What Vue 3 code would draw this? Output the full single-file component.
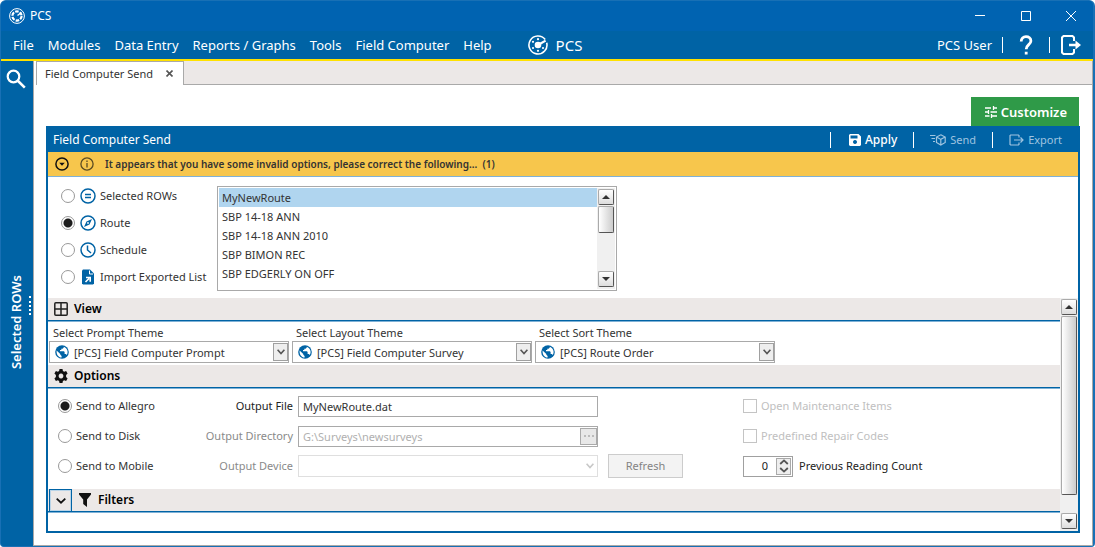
<script setup>
import { ref } from 'vue'

const menu = ['File', 'Modules', 'Data Entry', 'Reports / Graphs', 'Tools', 'Field Computer', 'Help']
const sources = [
  { id: 'rows', label: 'Selected ROWs' },
  { id: 'route', label: 'Route' },
  { id: 'schedule', label: 'Schedule' },
  { id: 'import', label: 'Import Exported List' }
]
const source = ref('route')
const routes = ['MyNewRoute', 'SBP 14-18 ANN', 'SBP 14-18 ANN 2010', 'SBP BIMON REC', 'SBP EDGERLY ON OFF']
const route = ref('MyNewRoute')
const themes = [
  { id: 'prompt', label: 'Select Prompt Theme', value: '[PCS] Field Computer Prompt' },
  { id: 'layout', label: 'Select Layout Theme', value: '[PCS] Field Computer Survey' },
  { id: 'sort', label: 'Select Sort Theme', value: '[PCS] Route Order' }
]
const target = ref('allegro')
const file = ref('MyNewRoute.dat')
const directory = ref('G:\\Surveys\\newsurveys')
const count = ref('0')
</script>

<template>
  <div class="window">
    <header class="titlebar">
      <svg class="app-icon" viewBox="0 0 16 16" fill="none" stroke="#fff">
        <circle cx="8" cy="8" r="7.4" stroke-width="1" />
        <circle cx="8" cy="8" r="4.6" stroke-width="2.2" stroke-dasharray="3.6 1.2" />
        <path d="M8.500 7.500l4-3" stroke-width="1.400" />
      </svg>
      <span class="app-title">PCS</span>
      <button class="win-btn" aria-label="Minimize">
        <svg viewBox="0 0 10 10"><path d="M0 4.500h10" /></svg>
      </button>
      <button class="win-btn" aria-label="Maximize">
        <svg viewBox="0 0 10 10"><path d="M.5.5h9v9h-9z" /></svg>
      </button>
      <button class="win-btn" aria-label="Close">
        <svg viewBox="0 0 10 10"><path d="M0 0l10 10M10 0L0 10" /></svg>
      </button>
    </header>

    <nav class="menubar">
      <button v-for="m in menu" :key="m" class="menu-item">{{ m }}</button>
      <div class="brand">
        <svg viewBox="0 0 20 20" width="20" height="20" fill="none" stroke="#fff">
          <path d="M17.200 4.600A9 9 0 1 0 18.700 7.800" stroke-width="1.600" />
          <path d="M10 10l7.600-4.400" stroke-width="2.200" />
          <circle cx="10" cy="10" r="3.300" fill="#fff" stroke="none" />
          <g fill="#fff" stroke="none">
            <circle cx="10" cy="4.200" r="1.100" /><circle cx="5" cy="6.800" r="1.100" />
            <circle cx="5" cy="13" r="1.100" /><circle cx="10" cy="15.800" r="1.100" />
            <circle cx="15" cy="13" r="1.100" />
          </g>
        </svg>
        <span>PCS</span>
      </div>
      <div class="user-tools">
        <span>PCS User</span>
        <i class="bar"></i>
        <button class="tool" aria-label="Help">
          <svg viewBox="0 0 14 20" width="14" height="20" fill="none" stroke="#fff" stroke-width="2.800">
            <path d="M2.200 6.600C2.200 3.300 4.200 1.700 7 1.700s4.900 1.600 4.900 4.300c0 3.600-4.700 3.800-4.700 8.200M7.200 16.800v2.800" />
          </svg>
        </button>
        <i class="bar"></i>
        <button class="tool" aria-label="Log out">
          <svg viewBox="0 0 20 20" width="20" height="20" fill="none" stroke="#fff" stroke-width="2">
            <path d="M13 6V2.500L11.500 1H2.500L1 2.500v15L2.500 19h9l1.500-1.500V14" />
            <path d="M8 10h8" stroke-width="2.400" />
            <path d="M14.500 5.500l5.500 4.500-5.500 4.500z" fill="#fff" stroke="none" />
          </svg>
        </button>
      </div>
    </nav>

    <div class="body">
      <aside class="sidebar">
        <button class="tool" aria-label="Search">
          <svg viewBox="0 0 20 20" width="20" height="20" fill="none" stroke="#fff">
            <circle cx="7.500" cy="7.500" r="5.800" stroke-width="2.200" />
            <path d="M11.800 11.800l7 6.800" stroke-width="2.600" />
          </svg>
        </button>
        <span class="side-label">Selected ROWs</span>
        <i class="grip"></i>
      </aside>

      <main class="workspace">
        <div class="tabs">
          <div class="tab">
            <span>Field Computer Send</span>
            <button class="tab-close" aria-label="Close tab">
              <svg viewBox="0 0 7 7" width="7" height="7" stroke="#555" stroke-width="1.600"><path d="M.5.5l6 6M6.500.5l-6 6" /></svg>
            </button>
          </div>
          <div class="tab-fill"></div>
        </div>

        <div class="page">
          <button class="customize">
            <svg viewBox="0 0 12 12" width="12" height="12" fill="none" stroke="#fff" stroke-width="1.300">
              <path d="M0 2h6M8.500 2H12M8.500 0v4M0 6h3M5.500 6H12M3.500 4v4M0 10h4.500M7 10h5M6.500 8v4" />
            </svg>
            Customize
          </button>

          <section class="panel">
            <div class="panel-head">
              <h1>Field Computer Send</h1>
              <button class="action ready">
                <svg viewBox="0 0 12 12" width="12" height="12"><path fill="#fff" fill-rule="evenodd" d="M1 0h8.500L12 2.500V11l-1 1H1l-1-1V1zM1.500 1.500V4.500H8.500V1.500zM6 6a2 2 0 1 0 .01 0z" /></svg>
                Apply
              </button>
              <button class="action" disabled>
                <svg viewBox="0 0 16 12" width="16" height="12" fill="none" stroke="currentColor" stroke-width="1.200">
                  <path d="M0 1.500h5.500M1.500 4.500h3.500M3 7.500h2M10.800 .8L15.200 3v5.500L10.800 11 6.500 8.500V3zM6.500 3l4.300 2.400L15.200 3M10.800 5.400V11" />
                </svg>
                Send
              </button>
              <button class="action" disabled>
                <svg viewBox="0 0 15 12" width="15" height="12" fill="none" stroke="currentColor" stroke-width="1.200">
                  <path d="M10 3.500V1.600L9.400 1H1.600L1 1.600v8.800l.6.600h7.800l.6-.6V8.500M5 6h9M11.500 3.500L14 6l-2.500 2.500" />
                </svg>
                Export
              </button>
            </div>

            <div class="alert">
              <svg viewBox="0 0 14 14" width="14" height="14" fill="none" stroke="#111" stroke-width="1.500">
                <circle cx="7" cy="7" r="6.100" /><path d="M4.200 5.800h5.600L7 8.800z" fill="#111" stroke="none" />
              </svg>
              <svg viewBox="0 0 14 14" width="14" height="14" fill="none" stroke="#5b4c22" stroke-width="1.300">
                <circle cx="7" cy="7" r="6.100" /><path d="M7 6v4.500M7 3.500v1.500" />
              </svg>
              <span>It appears that you have some invalid options, please correct the following...&nbsp; (1)</span>
            </div>

            <div class="source">
              <div class="source-list">
                <label v-for="s in sources" :key="s.id" class="source-row">
                  <input v-model="source" type="radio" name="source" :value="s.id" />
                  <svg viewBox="0 0 16 16" width="16" height="16" fill="none" stroke="#0063a5" stroke-width="1.500">
                    <template v-if="s.id === 'rows'">
                      <circle cx="8" cy="8" r="7" /><path d="M5 6.500h6M5 9.500h6" />
                    </template>
                    <template v-else-if="s.id === 'route'">
                      <circle cx="8" cy="8" r="7" /><path d="M12 4L9.500 9.500 4 12 6.500 6.500z" fill="#0063a5" stroke="none" /><circle cx="8" cy="8" r=".9" fill="#fff" stroke="none" />
                    </template>
                    <template v-else-if="s.id === 'schedule'">
                      <circle cx="8" cy="8" r="7" /><path d="M7.500 3.500V8l3.500 3" />
                    </template>
                    <template v-else>
                      <path d="M3 .5h7L14 4.500V14.500l-1 1H3l-1-1v-13z" fill="#0063a5" stroke="none" />
                      <path d="M9.500 1.500V5H13" stroke="#fff" stroke-width="1" />
                      <path d="M5.500 13L9 9.500M6 8.500h4.200v4.200" stroke="#fff" stroke-width="1.600" />
                    </template>
                  </svg>
                  <span>{{ s.label }}</span>
                </label>
              </div>
              <div class="listbox">
                <ul role="listbox" aria-label="Routes">
                  <li v-for="r in routes" :key="r" role="option" :aria-selected="r === route" @click="route = r">{{ r }}</li>
                </ul>
                <div class="scroll">
                  <button class="scroll-btn" aria-label="Scroll up"><svg viewBox="0 0 8 4" width="8" height="4"><path d="M0 4l4-4 4 4z" /></svg></button>
                  <i class="thumb short"></i>
                  <button class="scroll-btn last" aria-label="Scroll down"><svg viewBox="0 0 8 4" width="8" height="4"><path d="M0 0l4 4 4-4z" /></svg></button>
                </div>
              </div>
            </div>

            <div class="lower">
              <div class="sections">
                <h2 class="section-head">
                  <svg viewBox="0 0 14 14" width="14" height="14" fill="none" stroke="#222" stroke-width="1.500"><rect x=".8" y=".8" width="12.400" height="12.400" rx="1" /><path d="M7 1v12M1 7h12" /></svg>
                  View
                </h2>
                <div class="themes">
                  <div v-for="t in themes" :key="t.id" class="theme">
                    <label :for="t.id">{{ t.label }}</label>
                    <div class="combo">
                      <select :id="t.id"><option>{{ t.value }}</option></select>
                      <svg class="globe" viewBox="0 0 14 14" width="14" height="14">
                        <circle cx="7" cy="7" r="6.800" fill="#0063a5" />
                        <path d="M1.600 5.400L5.300 9v.8l1.300 1.200v1.600C3.400 12.300 1.200 9.400 1.600 5.400zM8.800 1.700v.7L7.600 3.700H6.300V5H5v1.300h3.900l.7.700v2h1.200l1 .9c1.800-2.800.6-6.800-3-8.200z" fill="#fff" />
                      </svg>
                      <i class="drop"><svg viewBox="0 0 8 6" width="8" height="6" fill="none" stroke="#555" stroke-width="1.600"><path d="M.6.8L4 4.600 7.400.8" /></svg></i>
                    </div>
                  </div>
                </div>

                <h2 class="section-head">
                  <svg viewBox="0 0 14 14" width="14" height="14">
                    <path fill="#111" fill-rule="evenodd" d="M5.500 0h3l.4 2 1.300.7 1.900-.7 1.500 2.600-1.500 1.300v2.200l1.500 1.300-1.500 2.600-1.900-.7-1.300.7-.4 2h-3l-.4-2-1.300-.7-1.900.7L.4 9.400l1.500-1.300V5.900L.4 4.600 1.900 2l1.900.7L5.100 2zM7 4.600a2.400 2.400 0 1 0 .01 0z" />
                  </svg>
                  Options
                </h2>
                <div class="options">
                  <label class="opt-radio"><input v-model="target" type="radio" name="target" value="allegro" />Send to Allegro</label>
                  <label class="opt-label" for="out-file">Output File</label>
                  <input id="out-file" v-model="file" class="text" type="text" />
                  <label class="opt-check"><input type="checkbox" disabled />Open Maintenance Items</label>

                  <label class="opt-radio"><input v-model="target" type="radio" name="target" value="disk" />Send to Disk</label>
                  <label class="opt-label off" for="out-dir">Output Directory</label>
                  <div class="dir">
                    <input id="out-dir" v-model="directory" class="text" type="text" disabled />
                    <button class="browse" disabled aria-label="Browse"><i></i><i></i><i></i></button>
                  </div>
                  <label class="opt-check"><input type="checkbox" disabled />Predefined Repair Codes</label>

                  <label class="opt-radio"><input v-model="target" type="radio" name="target" value="mobile" />Send to Mobile</label>
                  <label class="opt-label off" for="out-dev">Output Device</label>
                  <div class="combo device">
                    <select id="out-dev" disabled><option></option></select>
                    <i class="drop plain"><svg viewBox="0 0 8 6" width="8" height="6" fill="none" stroke="#c8c8c8" stroke-width="1.600"><path d="M.6.8L4 4.600 7.400.8" /></svg></i>
                  </div>
                  <button class="refresh" disabled>Refresh</button>
                  <div class="count">
                    <div class="spin">
                      <input id="count" v-model="count" type="text" />
                      <button aria-label="Change count"><svg viewBox="0 0 10 14" width="10" height="14" fill="none" stroke="#555" stroke-width="1.800"><path d="M1.200 5L5 1.400 8.800 5M1.200 9L5 12.600 8.800 9" /></svg></button>
                    </div>
                    <label for="count">Previous Reading Count</label>
                  </div>
                </div>

                <h2 class="section-head filters">
                  <button class="expander" aria-label="Expand filters"><svg viewBox="0 0 10 6" width="10" height="6" fill="none" stroke="#111" stroke-width="1.800"><path d="M.7.7L5 4.700 9.300.7" /></svg></button>
                  <svg viewBox="0 0 14 14" width="14" height="14"><path fill="#111" d="M1 0h12v1.500L9 6.500V14L5.200 11V6.500L1 1.500z" /></svg>
                  Filters
                </h2>
              </div>
              <div class="scroll">
                <button class="scroll-btn" aria-label="Scroll up"><svg viewBox="0 0 8 4" width="8" height="4"><path d="M0 4l4-4 4 4z" /></svg></button>
                <i class="thumb"></i>
                <button class="scroll-btn last" aria-label="Scroll down"><svg viewBox="0 0 8 4" width="8" height="4"><path d="M0 0l4 4 4-4z" /></svg></button>
              </div>
            </div>
          </section>
        </div>
      </main>
    </div>
  </div>
</template>

<style>
body {
  margin: 0;
  background: #fff;
}
</style>

<style scoped>
* {
  box-sizing: border-box;
}
.window {
  display: flex;
  flex-direction: column;
  min-height: 100vh;
  border: 1px solid #1870b5;
  border-right-width: 2px;
  border-radius: 6px 6px 4px 4px;
  overflow: hidden;
  background: #0063a5;
  color: #333;
  font: 11px/16px "Noto Sans", "Open Sans", sans-serif;
}
button,
input,
select {
  font: inherit;
  color: inherit;
  margin: 0;
  padding: 0;
  border: 0;
  border-radius: 0;
  background: none;
}
button {
  display: flex;
  align-items: center;
  justify-content: center;
  white-space: nowrap;
}
svg {
  flex: none;
  display: block;
}
.titlebar {
  display: flex;
  align-items: center;
  height: 30px;
  padding-left: 8px;
  background: #0063b1;
  color: #fff;
  font-size: 12px;
}
.app-icon {
  width: 16px;
  height: 16px;
}
.app-title {
  flex: 1;
  padding-left: 5px;
}
.win-btn {
  width: 46px;
  height: 30px;
}
.win-btn:last-child {
  width: 44px;
}
.win-btn svg {
  width: 10px;
  height: 10px;
  fill: none;
  stroke: #fff;
}
.menubar {
  display: flex;
  align-items: center;
  gap: 14px;
  height: 30px;
  padding: 0 12px;
  border-bottom: 2px solid #ffe100;
  color: #fff;
  font-size: 13px;
}
.brand {
  display: flex;
  align-items: center;
  gap: 8px;
  margin-left: 22px;
  font-size: 15px;
}
.user-tools {
  display: flex;
  align-items: center;
  gap: 10px;
  margin-left: auto;
}
.user-tools .tool {
  margin: 0 6px;
}
.user-tools .tool:last-child {
  margin: 0 0 0 1px;
}
.bar {
  width: 1px;
  height: 16px;
  background: #fff;
}
.body {
  flex: 1;
  display: flex;
}
.sidebar {
  position: relative;
  width: 32px;
  flex: none;
  display: flex;
  flex-direction: column;
  align-items: center;
  padding: 8px 2px 0 0;
  color: #fff;
}
.side-label {
  margin-top: auto;
  margin-bottom: 177px;
  writing-mode: vertical-rl;
  transform: rotate(180deg);
  font-size: 13px;
  font-weight: 600;
}
.grip {
  position: absolute;
  right: 2px;
  top: 235px;
  height: 19px;
  border-left: 2px dotted #fff;
}
.workspace {
  flex: 1;
  min-width: 0;
  display: flex;
  flex-direction: column;
  background: #fff;
  border: 1px solid #a9a9a9;
  border-top: 0;
}
.tabs {
  display: flex;
  height: 24px;
}
.tab {
  display: flex;
  align-items: center;
  gap: 13px;
  margin-left: 2px;
  padding: 0 10px 0 8px;
  border: 1px solid #a9a9a9;
  border-bottom: 0;
}
.tab-fill {
  flex: 1;
  background: #ece8e7;
  border-bottom: 1px solid #a9a9a9;
}
.page {
  flex: 1;
  display: flex;
  flex-direction: column;
  padding: 12px;
}
.customize {
  align-self: flex-end;
  gap: 4px;
  height: 29px;
  margin-right: 1px;
  padding: 0 12px 0 14px;
  background: #2f9a48;
  color: #fff;
  font-size: 13px;
  font-weight: 600;
}
.panel {
  flex: 1;
  display: flex;
  flex-direction: column;
  border: 2px solid #0063a5;
  border-top: 0;
}
.panel-head {
  display: flex;
  align-items: center;
  height: 26px;
  padding: 1px 0 0 5px;
  background: #0063a5;
  color: #fff;
}
h1 {
  flex: 1;
  margin: 0;
  font-size: 12px;
  font-weight: 400;
}
.action {
  gap: 4px;
  height: 16px;
  padding: 0 16px;
  border-left: 1px solid #fff;
}
.ready {
  padding-left: 18px;
  font-size: 12px;
  font-weight: 500;
}
.action:disabled {
  color: #9fc4e0;
}
.alert {
  display: flex;
  align-items: center;
  gap: 11px;
  height: 25px;
  padding-left: 7px;
  border-bottom: 1px solid #7fb1d6;
  background: #f7c64c;
  font-size: 10px;
  font-weight: 600;
}
.source {
  display: flex;
  height: 121px;
  padding: 9px 0 0 13px;
}
.source-list {
  width: 156px;
}
.source-row {
  display: flex;
  align-items: center;
  gap: 4px;
  height: 27px;
  padding-bottom: 7px;
  white-space: nowrap;
}
.source-row svg {
  margin-left: 1px;
}
input[type="radio"] {
  appearance: none;
  flex: none;
  width: 14px;
  height: 14px;
  border: 1px solid #999;
  border-radius: 50%;
  background: #fff;
}
input[type="radio"]:checked {
  background: radial-gradient(circle, #1c1c1c 4px, #fff 5px);
}
.listbox {
  display: flex;
  width: 400px;
  height: 105px;
  padding: 1px;
  border: 1px solid #a9a9a9;
}
ul {
  flex: 1;
  margin: 0;
  padding: 0;
  list-style: none;
}
li {
  height: 19px;
  padding: 2px 3px 1px;
}
li[aria-selected="true"] {
  background: #b0d5ef;
}
.scroll {
  display: flex;
  flex-direction: column;
  gap: 1px;
  width: 18px;
  flex: none;
  padding: 1px 1px 2px;
  background: #f0f0f0;
}
.scroll-btn {
  width: 16px;
  height: 16px;
  border: 1px solid #aaa;
  border-right-color: #555;
  border-bottom-color: #555;
  border-radius: 2px;
  background: linear-gradient(#fff, #ddd);
}
.scroll-btn svg {
  fill: #333;
}
.scroll-btn.last {
  margin-top: auto;
}
.thumb {
  width: 16px;
  height: 179px;
  border: 1px solid #aaa;
  border-right-color: #555;
  border-bottom-color: #555;
  border-radius: 2px;
  background: linear-gradient(90deg, #fff, #ccc);
}
.thumb.short {
  height: 27px;
}
.lower {
  flex: 1;
  display: flex;
}
.sections {
  flex: 1;
  min-width: 0;
}
.section-head {
  display: flex;
  align-items: center;
  gap: 6px;
  height: 23px;
  margin: 0;
  padding-left: 6px;
  border-bottom: 1px solid #0063a5;
  box-shadow: 0 1px #7fb1d6;
  background: #ece8e7;
  color: #000;
  font-size: 12px;
  font-weight: 600;
}
.themes {
  display: flex;
  gap: 3px;
  height: 44px;
  padding: 4px 0 0 1px;
}
.theme {
  width: 240px;
}
.theme label {
  display: block;
  padding-left: 4px;
}
.combo {
  position: relative;
}
.combo select {
  appearance: none;
  display: block;
  width: 100%;
  height: 22px;
  padding: 1px 0 0 24px;
  border: 1px solid #a9a9a9;
  background: #fff;
}
.globe {
  position: absolute;
  left: 6px;
  top: 4px;
  pointer-events: none;
}
.drop {
  position: absolute;
  right: 1px;
  top: 2px;
  display: flex;
  align-items: center;
  justify-content: center;
  width: 15px;
  height: 18px;
  border: 1px solid #a0a0a0;
  background: #eee;
  pointer-events: none;
}
.options {
  display: grid;
  grid-template-columns: 140px 100px 300px 135px 1fr;
  grid-auto-rows: 30px;
  align-items: center;
  height: 101px;
  padding: 3px 0 0 10px;
}
.opt-radio {
  display: flex;
  align-items: center;
  gap: 4px;
}
.opt-label {
  justify-self: end;
  padding-right: 5px;
  color: #222;
  white-space: nowrap;
}
.opt-label.off {
  color: #8a8a8a;
}
.text {
  width: 100%;
  height: 21px;
  padding: 1px 0 0 4px;
  border: 1px solid #a9a9a9;
  background: #fff;
}
.text:disabled {
  color: #b0b0b0;
}
.dir {
  position: relative;
  display: flex;
}
.browse {
  position: absolute;
  right: 1px;
  top: 2px;
  gap: 2px;
  width: 17px;
  height: 17px;
  border: 1px solid #aaa;
  background: #e8e8e8;
}
.browse i {
  width: 2px;
  height: 2px;
  background: #bbb;
}
.opt-check {
  grid-column: 5;
  display: flex;
  align-items: center;
  gap: 4px;
  padding-left: 10px;
  color: #c0c0c0;
}
.opt-check input {
  appearance: none;
  width: 14px;
  height: 14px;
  border: 1px solid #c4c4c4;
}
.device select {
  border-color: #d2d2d2;
}
.plain {
  border: 0;
  background: none;
}
.refresh {
  width: 75px;
  height: 24px;
  margin-left: 10px;
  border: 1px solid #ccc;
  background: #f3f3f3;
  color: #838383;
}
.count {
  display: flex;
  align-items: center;
  gap: 6px;
  padding-left: 10px;
  color: #222;
}
.spin {
  display: flex;
  width: 50px;
  height: 21px;
  padding: 1px;
  border: 1px solid #a0a0a0;
}
.spin input {
  flex: 1;
  min-width: 0;
  padding-right: 8px;
  text-align: right;
}
.spin button {
  width: 15px;
  border: 1px solid #aaa;
  background: #eee;
}
.filters {
  padding-left: 1px;
}
.expander {
  align-self: stretch;
  width: 23px;
  border: 1px solid #0063a5;
  border-bottom: 0;
  box-shadow: inset 0 0 0 1px #b9d4e8;
}
</style>
